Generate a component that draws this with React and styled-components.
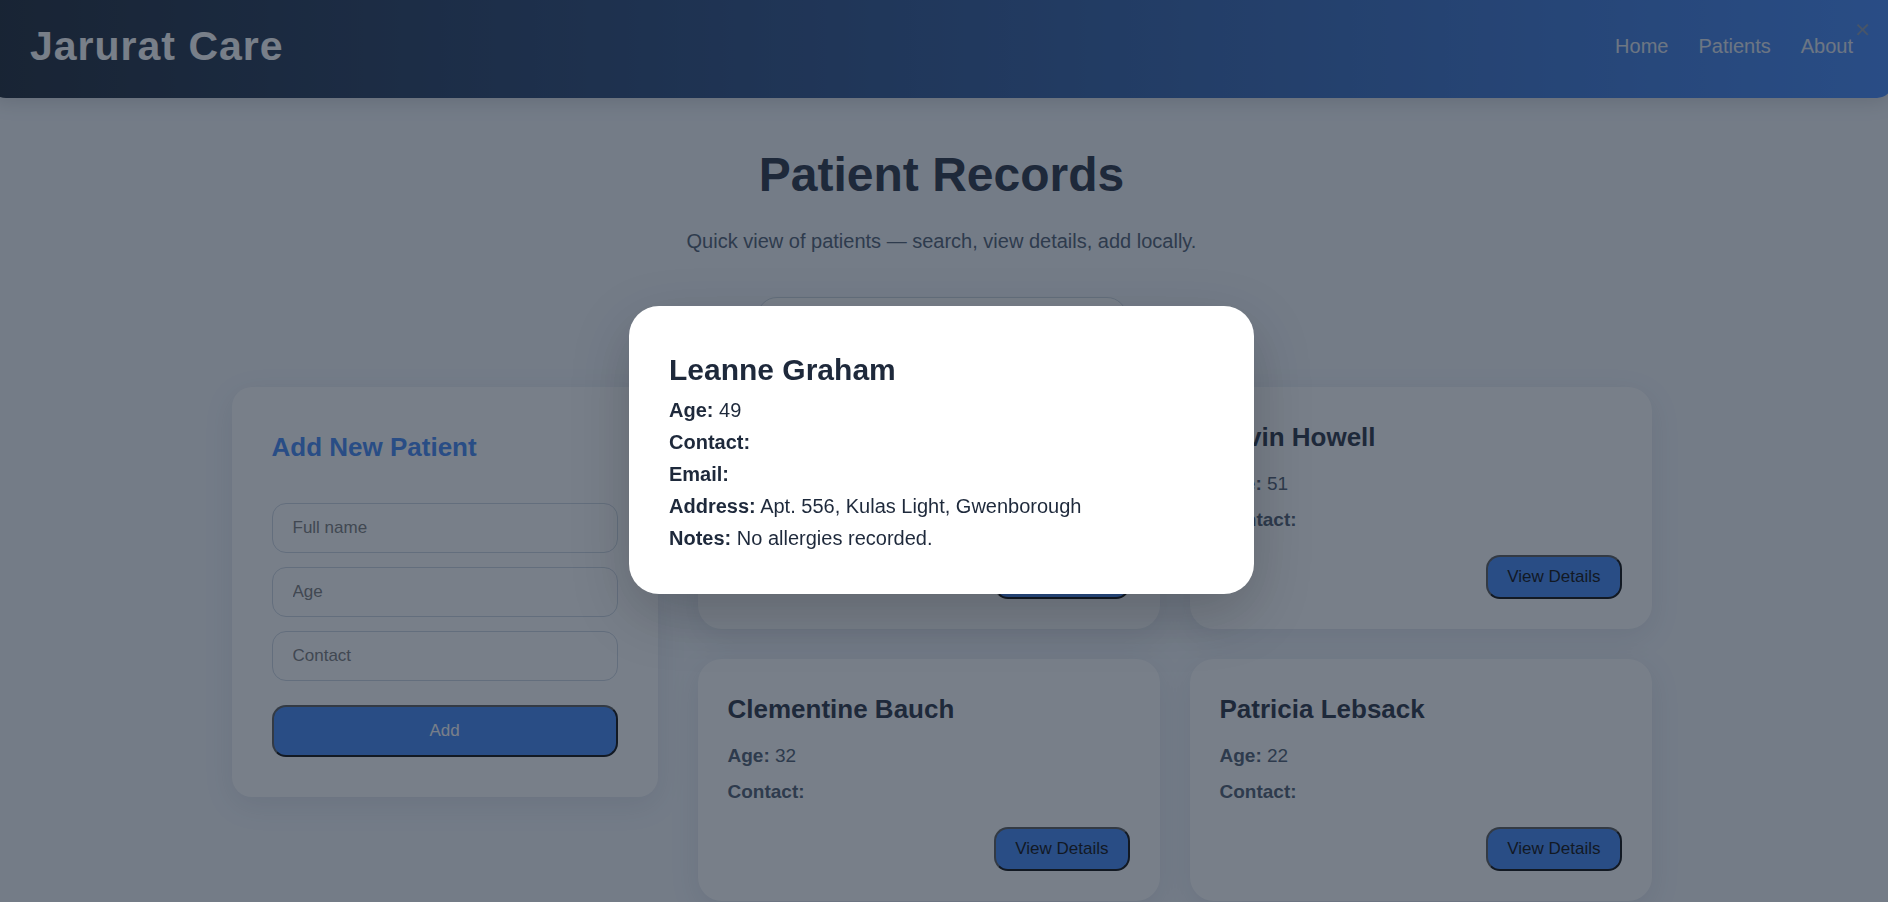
import React, { useState } from "react";
import styled, { createGlobalStyle } from "styled-components";

const GlobalStyle = createGlobalStyle`
  *, *::before, *::after { box-sizing: border-box; }
  body {
    margin: 0;
    overflow: hidden;
    background: #f4f7fb;
    color: #1e293b;
    font-family: "Liberation Sans", Arial, sans-serif;
    line-height: 1.6;
  }
  h1, h2, h3, p { margin: 0; }
  button, input { font-family: inherit; font-size: 17px; }
`;

const Page = styled.div`
  margin: -6px -5px 0 -10px;
`;

const Header = styled.header`
  display: flex;
  align-items: center;
  justify-content: space-between;
  padding: 20px 40px;
  border-radius: 0 0 16px 16px;
  background: linear-gradient(90deg, #111c2b, #3b82f6);
  box-shadow: 0 4px 20px rgba(0, 0, 0, 0.15);
`;

const Brand = styled.h1`
  color: #fff;
  font-size: 41px;
  line-height: 64px;
  letter-spacing: 1px;
`;

const Nav = styled.nav`
  display: flex;
  gap: 30px;
`;

const NavLink = styled.a`
  color: #e2e8f0;
  font-size: 20px;
  text-decoration: none;
`;

const Main = styled.main`
  max-width: 1500px;
  margin: 0 auto;
  padding: 40px;
`;

const Intro = styled.section`
  display: flex;
  flex-direction: column;
  align-items: center;
  text-align: center;
`;

const Title = styled.h2`
  font-size: 48px;
  line-height: 74px;
`;

const Subtitle = styled.p`
  margin: 13px 0 40px;
  color: #475569;
  font-size: 20px;
`;

const TextInput = styled.input`
  width: 100%;
  height: 50px;
  padding: 0 20px;
  border: 1px solid #cbd5e1;
  border-radius: ${(p) => (p.$round ? "20px" : "14px")};
  background: #fff;
  max-width: ${(p) => (p.$round ? "370px" : "none")};
`;

const Columns = styled.div`
  display: grid;
  grid-template-columns: 30% 1fr;
  gap: 40px;
  align-items: start;
  margin-top: 40px;
`;

const Card = styled.article`
  padding: 30px;
  border-radius: 24px;
  background: #fff;
  box-shadow: 0 8px 30px rgba(30, 41, 79, 0.1);
`;

const FormCard = styled(Card).attrs({ as: "form" })`
  display: flex;
  flex-direction: column;
  gap: 14px;
  padding: 40px;
  border-radius: 20px;
`;

const CardTitle = styled.h3`
  font-size: 26px;
  line-height: 40px;
`;

const FormTitle = styled(CardTitle)`
  margin-bottom: 22px;
  color: #3b82f6;
`;

const Button = styled.button`
  height: 44px;
  padding: 0 19px;
  border-radius: 14px;
  background: #3b82f6;
  color: #000;
`;

const AddButton = styled(Button)`
  height: 52px;
  margin-top: 10px;
  color: #fff;
`;

const CardGrid = styled.div`
  display: grid;
  grid-template-columns: 1fr 1fr;
  gap: 30px;
`;

const CardBody = styled.div`
  display: flex;
  flex-direction: column;
  gap: 6px;
  margin: 12px 0 20px;
  color: #475569;
  font-size: 19px;
  line-height: 30px;
`;

const CardActions = styled.div`
  display: flex;
  justify-content: flex-end;
`;

const Overlay = styled.div`
  position: fixed;
  inset: -6px -5px -4px -10px;
  display: flex;
  align-items: center;
  justify-content: center;
  background: rgba(30, 41, 59, 0.6);
`;

const Modal = styled.div`
  width: 100%;
  max-width: 625px;
  padding: 40px;
  border-radius: 30px;
  background: #fff;
  box-shadow: 0 20px 60px rgba(0, 0, 0, 0.2);
  font-size: 20px;
`;

const ModalTitle = styled.h2`
  font-size: 30px;
`;

const CloseButton = styled.button`
  position: absolute;
  top: 20px;
  right: 20px;
  padding: 0 2px;
  border: 0;
  background: none;
  color: #475569;
  font-family: "DejaVu Sans", sans-serif;
  font-size: 20px;
  line-height: 32px;
`;

const patients = [
  { name: "Leanne Graham", age: 49 },
  { name: "Ervin Howell", age: 51 },
  { name: "Clementine Bauch", age: 32 },
  { name: "Patricia Lebsack", age: 22 },
];

const details = [
  ["Age", "49"],
  ["Contact", ""],
  ["Email", ""],
  ["Address", "Apt. 556, Kulas Light, Gwenborough"],
  ["Notes", "No allergies recorded."],
];

function PatientCard({ name, age, onView }) {
  return (
    <Card>
      <CardTitle>{name}</CardTitle>
      <CardBody>
        <p><strong>Age:</strong> {age}</p>
        <p><strong>Contact:</strong></p>
      </CardBody>
      <CardActions>
        <Button type="button" onClick={onView}>View Details</Button>
      </CardActions>
    </Card>
  );
}

export default function App() {
  const [open, setOpen] = useState(true);
  return (
    <>
      <GlobalStyle />
      <Page>
        <Header>
          <Brand>Jarurat Care</Brand>
          <Nav>
            <NavLink href="#home">Home</NavLink>
            <NavLink href="#patients">Patients</NavLink>
            <NavLink href="#about">About</NavLink>
          </Nav>
        </Header>
        <Main>
          <Intro>
            <Title>Patient Records</Title>
            <Subtitle>Quick view of patients — search, view details, add locally.</Subtitle>
            <TextInput $round type="search" aria-label="Search patients" />
          </Intro>
          <Columns>
            <FormCard onSubmit={(e) => e.preventDefault()}>
              <FormTitle>Add New Patient</FormTitle>
              <TextInput aria-label="Full name" placeholder="Full name" />
              <TextInput aria-label="Age" placeholder="Age" />
              <TextInput aria-label="Contact" placeholder="Contact" />
              <AddButton type="submit">Add</AddButton>
            </FormCard>
            <CardGrid>
              {patients.map((p) => (
                <PatientCard key={p.name} {...p} onView={() => setOpen(true)} />
              ))}
            </CardGrid>
          </Columns>
        </Main>
      </Page>
      {open && (
        <Overlay>
          <CloseButton type="button" aria-label="Close" onClick={() => setOpen(false)}>✕</CloseButton>
          <Modal role="dialog" aria-modal="true" aria-labelledby="patient-name">
            <ModalTitle id="patient-name">Leanne Graham</ModalTitle>
            {details.map(([label, value]) => (
              <p key={label}><strong>{label}:</strong> {value}</p>
            ))}
          </Modal>
        </Overlay>
      )}
    </>
  );
}
